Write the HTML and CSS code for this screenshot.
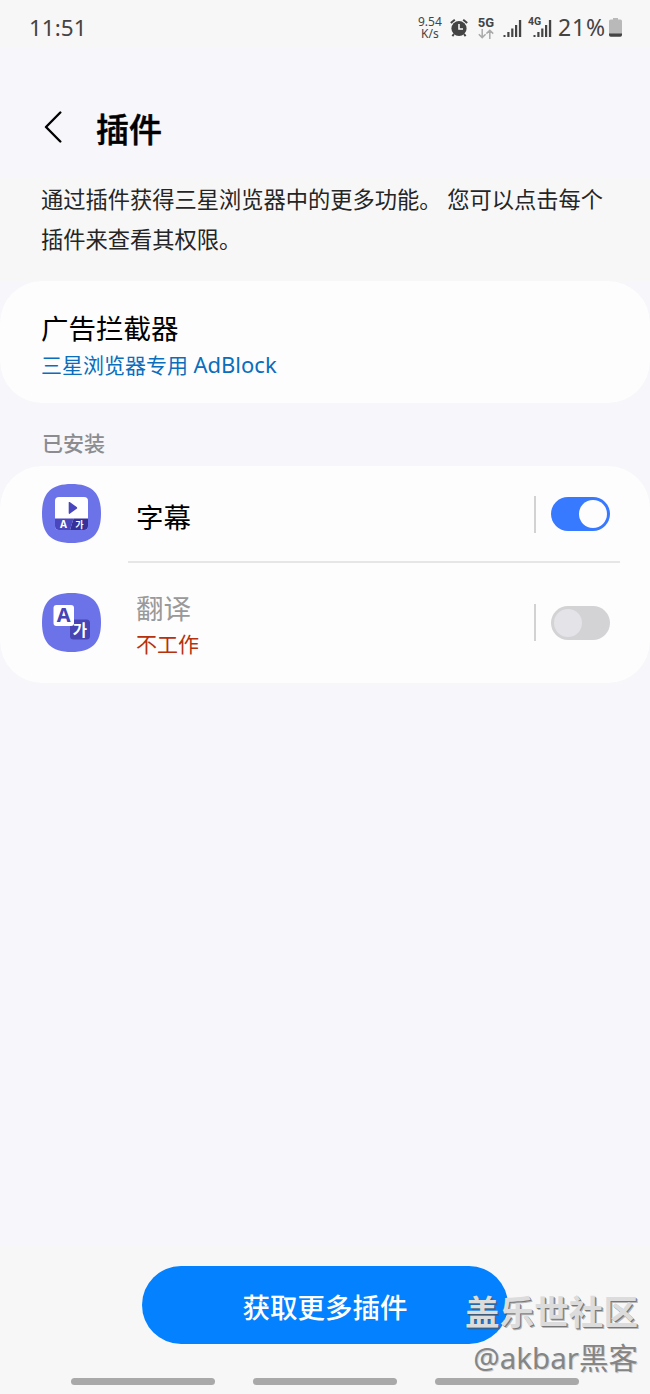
FILE: index.html
```
<!DOCTYPE html>
<html lang="zh-CN">
<head>
  <meta charset="UTF-8">
  <meta name="viewport" content="width=device-width, initial-scale=1.0">
  <title>插件</title>
  <link rel="stylesheet" href="styles.css">
</head>

<body>
  <div class="screen">
    <div class="status-bar">
      <span class="clock">11:51</span>
      <div class="indicators">
        <div class="speed">
          <span>9.54</span>
          <span>K/s</span>
        </div>
        <svg class="alarm" width="18" height="20" viewBox="0 0 18 20">
          <circle cx="9" cy="10.5" r="7.6" fill="#444"/>
          <path d="M.8 5 4.800 1.800M17.200 5 13.200 1.800M4 16 2.400 18.200M14 16l1.600 2.200" stroke="#444" stroke-width="2" fill="none"/>
          <path d="M9 6v5h4" stroke="#f7f7f7" stroke-width="1.6" fill="none"/>
        </svg>
        <div class="net">
          <span>5G</span>
          <svg width="16" height="10" viewBox="0 0 16 10" fill="none" stroke="#aaa" stroke-width="1.5">
            <path d="M4.2 0v8.6M.8 5.2l3.4 3.4 3.4-3.4M11.8 10V1.2M8.4 4.6l3.4-3.4 3.4 3.4"/>
          </svg>
        </div>
        <svg class="signal" width="19" height="18" viewBox="0 0 19 18" fill="#444">
          <path d="M.5 15h2v2h-2zM4.300 12h2.200v5H4.300zM8.200 8.500h2.200V17H8.200zM12 5h2.200v12H12zM15.900 0h2.300v17h-2.300z"/>
        </svg>
        <div class="signal-4g">
          <svg width="19" height="18" viewBox="0 0 19 18" fill="#444">
            <path d="M.5 15h2v2h-2zM4.300 12h2.200v5H4.300zM8.200 8.500h2.200V17H8.200zM12 5h2.200v12H12zM15.900 0h2.300v17h-2.300z"/>
          </svg>
          <span>4G</span>
        </div>
        <span class="percent">21%</span>
        <svg class="battery" width="13" height="19" viewBox="0 0 13 19">
          <path d="M4 0h5v1.500h2.500q1.500 0 1.500 1.500V16H0V3q0-1.500 1.500-1.500H4z" fill="#b9b9b9"/>
          <path d="M0 15.500h13V17q0 1.700-1.700 1.700H1.700Q0 18.700 0 17z" fill="#444"/>
        </svg>
      </div>
    </div>

    <div class="header">
      <svg class="back" width="18" height="32" viewBox="0 0 18 32" fill="none" stroke="#000" stroke-width="2.400" stroke-linecap="round" stroke-linejoin="round">
        <path d="M16.300 1.500 2 16l14.300 14.500"/>
      </svg>
      <h1>插件</h1>
    </div>

    <p class="intro">通过插件获得三星浏览器中的更多功能。 您可以点击每个插件来查看其权限。</p>

    <div class="card blocker">
      <div class="name">广告拦截器</div>
      <div class="sub">三星浏览器专用 <span class="latin">AdBlock</span></div>
    </div>

    <h2>已安装</h2>

    <div class="card">
      <div class="row">
        <svg class="app-icon" width="59" height="59" viewBox="0 0 59 59">
          <path d="M29.500 0C50 0 59 9 59 29.500S50 59 29.500 59 0 50 0 29.500 9 0 29.500 0z" fill="#6c73e8"/>
          <rect x="13" y="13" width="33" height="33" rx="4" fill="#fff"/>
          <path d="M13 34.500h18.500L28 46H17q-4 0-4-4z" fill="#4a46bd"/>
          <path d="M31.500 34.500H46V42q0 4-4 4H28z" fill="#35309a"/>
          <path d="M26.700 18.500v10.600q0 1.200 1 .6l7-5q1-.8 0-1.600l-7-5q-1-.6-1 .4z" fill="#4a46bd"/>
          <text x="21.500" y="43.700" class="glyph" font-size="10">A</text>
          <text x="37.500" y="43.500" class="glyph" font-size="9">가</text>
        </svg>
        <div class="label">
          <div class="name">字幕</div>
        </div>
        <span class="bar"></span>
        <span class="toggle on"></span>
      </div>
      <div class="row off">
        <svg class="app-icon" width="59" height="59" viewBox="0 0 59 59">
          <path d="M29.500 0C50 0 59 9 59 29.500S50 59 29.500 59 0 50 0 29.500 9 0 29.500 0z" fill="#6c73e8"/>
          <rect x="28" y="26.500" width="20" height="20" rx="3.500" fill="#4744b4"/>
          <rect x="11.500" y="12" width="20.500" height="21" rx="3" fill="#fff"/>
          <text x="21.700" y="29.300" class="glyph dark" font-size="20">A</text>
          <text x="38" y="42.500" class="glyph" font-size="15.500">가</text>
        </svg>
        <div class="label">
          <div class="name">翻译</div>
          <div class="sub">不工作</div>
        </div>
        <span class="bar"></span>
        <span class="toggle"></span>
      </div>
    </div>

    <div class="footer">
      <button>获取更多插件</button>
      <div class="nav">
        <span></span>
        <span></span>
        <span></span>
      </div>
    </div>

    <div class="watermark">
      <div class="community">盖乐世社区</div>
      <div class="author">@akbar黑客</div>
    </div>
  </div>
</body>
</html>
```
FILE: styles.css
```
:root {
  --bg: #f6f6fb;
  --bar: #f7f7f7;
  --card: #fdfdfd;
  --blue: #0381fe;
  --dark: #444;
}

* {
  box-sizing: border-box;
  margin: 0;
  padding: 0;
}

body {
  font-family: 'Noto Sans', 'Noto Sans CJK SC', sans-serif;
  background: var(--bg);
  color: #000;
}

.screen {
  position: relative;
  display: flex;
  flex-direction: column;
  width: 650px;
  height: 1394px;
  overflow: hidden;
}

.status-bar {
  display: flex;
  justify-content: space-between;
  height: 47px;
  padding: 0 28px 0 29px;
  background: var(--bar);
  color: var(--dark);
}

.clock {
  font-size: 22.5px;
  line-height: 55px;
}

.indicators {
  display: flex;
  align-items: flex-start;
}

.speed {
  display: flex;
  flex-direction: column;
  align-items: center;
  width: 26px;
  margin: 16px 7px 0 0;
  font-size: 12px;
  line-height: 12px;
}

.alarm {
  margin: 18px 10px 0 0;
}

.net {
  display: flex;
  flex-direction: column;
  align-items: center;
  width: 16px;
  margin: 17px 9px 0 0;
  font: bold 13px/12px Roboto, sans-serif;
}

.signal {
  margin: 20px 11px 0 0;
}

.signal-4g {
  position: relative;
  margin: 20px 6px 0 0;
}

.signal-4g svg {
  display: block;
}

.signal-4g span {
  position: absolute;
  top: -3px;
  left: -5px;
  font: bold 10.5px/10px Roboto, sans-serif;
}

.percent {
  margin-right: 3px;
  font-size: 23px;
  line-height: 55px;
  letter-spacing: 0.9px;
}

.battery {
  margin-top: 18px;
}

.header {
  display: flex;
  align-items: center;
  gap: 34px;
  height: 130px;
  padding: 30px 44px 0;
}

.back {
  margin-bottom: 1px;
}

h1 {
  padding-top: 5px;
  font-size: 33px;
  font-weight: 500;
  line-height: 40px;
  -webkit-text-stroke: 0.5px #000;
}

.intro {
  height: 104px;
  padding: 3px 41px 0;
  background: var(--bar);
  color: #252525;
  font-size: 22.25px;
  line-height: 40px;
}

.card {
  border-radius: 42px;
  background: var(--card);
}

.blocker {
  height: 122px;
  padding: 30px 41px 0;
}

.name {
  font-size: 27.5px;
  line-height: 36px;
}

.sub {
  font-size: 21px;
  line-height: 34px;
  color: #0a6ebd;
}

.latin {
  font-size: 22px;
}

h2 {
  height: 63px;
  padding: 0 42px;
  color: #8b8b90;
  font-size: 21px;
  font-weight: 500;
  line-height: 80px;
}

.row {
  position: relative;
  display: flex;
  align-items: center;
  height: 96px;
  padding: 0 40px 0 42px;
}

.row::after {
  content: '';
  position: absolute;
  right: 30px;
  bottom: -1px;
  left: 128px;
  border-bottom: 2px solid #e6e6e8;
}

.row.off {
  height: 121px;
}

.row.off::after {
  display: none;
}

.app-icon {
  margin-bottom: 1px;
}

.glyph {
  fill: #fff;
  font-family: 'Noto Sans', 'Noto Sans CJK KR', sans-serif;
  font-weight: 700;
  text-anchor: middle;
}

.glyph.dark {
  fill: #4744b4;
}

.label {
  flex: 1;
  padding: 7px 0 0 35px;
}

.off .name {
  color: #999;
}

.off .sub {
  color: #b5310f;
}

.bar {
  width: 2px;
  height: 37px;
  margin-right: 15px;
  background: #d2d2d4;
}

.toggle {
  width: 59px;
  height: 34px;
  padding: 3px;
  border-radius: 17px;
  background: #d3d3d6;
}

.toggle::after {
  content: '';
  display: block;
  width: 28px;
  height: 28px;
  border-radius: 50%;
  background: #e3e3e8;
}

.toggle.on {
  background: #387aff;
}

.toggle.on::after {
  margin-left: auto;
  background: #fdfdfd;
}

.footer {
  height: 149px;
  margin-top: auto;
  padding-top: 21px;
  background: var(--bar);
}

button {
  display: block;
  width: 366px;
  height: 78px;
  margin: 0 auto 34px 142px;
  padding-top: 1px;
  border: none;
  border-radius: 39px;
  background: var(--blue);
  color: #fff;
  font-family: inherit;
  font-size: 27.5px;
  font-weight: 500;
}

.nav {
  display: flex;
  gap: 38px;
  padding-left: 71px;
}

.nav span {
  width: 144px;
  height: 7px;
  border-radius: 4px;
  background: #a9a9a9;
}

.watermark {
  position: absolute;
  right: 12px;
  bottom: 15px;
  text-align: right;
}

.community {
  color: #dcdcdc;
  font-size: 34.6px;
  font-weight: 700;
  line-height: 48px;
  text-shadow: 1px 1px 0 rgba(80, 80, 80, 0.65), 2px 2px 0 rgba(80, 80, 80, 0.4);
}

.author {
  color: #858585;
  font-size: 29.5px;
  line-height: 43px;
  text-shadow: 1px 1px 0 #d0d0d0;
}
```
